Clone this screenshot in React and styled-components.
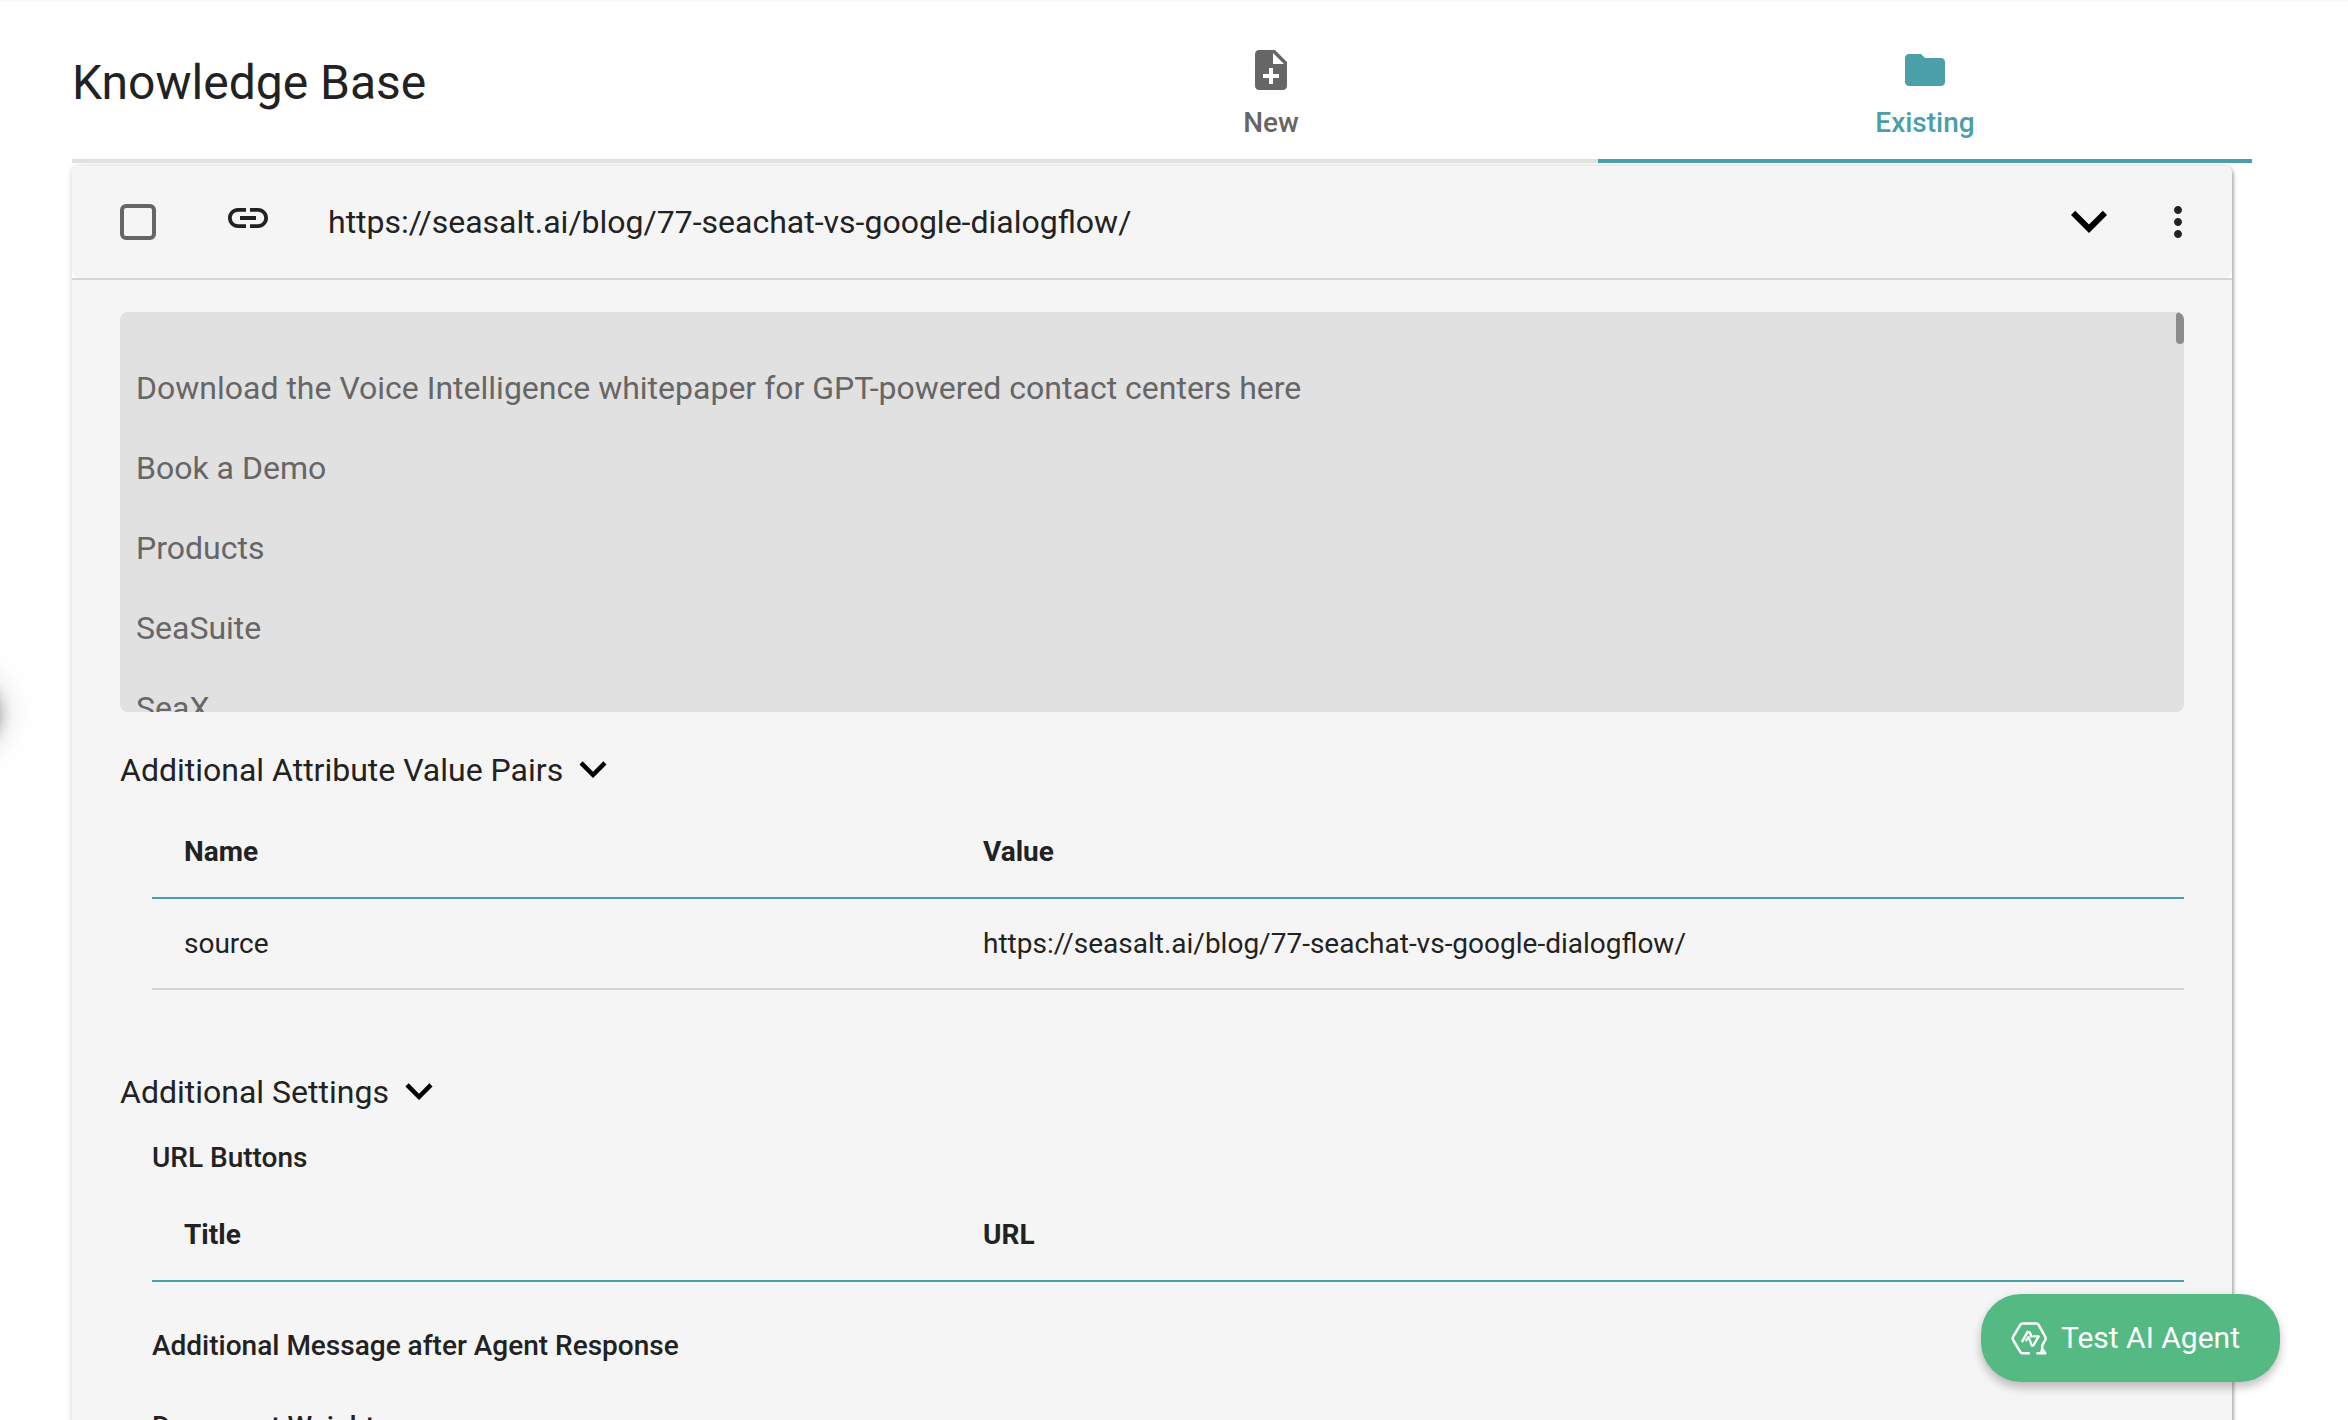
import React from "react";
import styled, { createGlobalStyle } from "styled-components";
import { MdNoteAdd, MdFolder, MdLink, MdMoreVert } from "react-icons/md";

const Global = createGlobalStyle`
  * { box-sizing: border-box; }
  html, body { margin: 0; height: 1420px; overflow: hidden; background: #fff; }
  body { font-family: Roboto, "Liberation Sans", sans-serif; color: #222; }
  svg { display: block; flex: none; }
`;

const Page = styled.main`
  position: relative;
  width: 2348px;
  height: 1420px;
  overflow: hidden;
  padding: 0 96px 0 72px;
  box-shadow: inset 0 2px 2px -1px rgba(0, 0, 0, 0.05);
`;

const Header = styled.header`
  display: flex;
  height: 163px;
`;

const Title = styled.h1`
  flex: 1;
  margin: 0;
  padding-top: 55px;
  border-bottom: 4px solid #e0e0e0;
  font-size: 48px;
  font-weight: 400;
  line-height: 56px;
`;

const Tab = styled.div`
  display: flex;
  flex-direction: column;
  align-items: center;
  width: 654px;
  padding-top: 46px;
  gap: 13px;
  border-bottom: 4px solid ${(p) => (p.$active ? "#4a9fa8" : "#e0e0e0")};
  color: ${(p) => (p.$active ? "#4a9fa8" : "#666")};
  font-size: 28px;
  font-weight: 500;
  line-height: 32px;
`;

const Card = styled.section`
  width: 2160px;
  height: 1300px;
  margin-top: 3px;
  border-radius: 8px;
  background: linear-gradient(#fff 0 112px, #f5f5f5 112px);
  box-shadow: 2px 2px 3px rgba(0, 0, 0, 0.22), 0 0 6px rgba(0, 0, 0, 0.18);
`;

const CardHeader = styled.div`
  display: flex;
  align-items: center;
  height: 112px;
  padding: 0 30px 0 48px;
  border-radius: 8px;
  background: #f5f5f5;
`;

const Checkbox = styled.span`
  flex: none;
  width: 36px;
  height: 36px;
  border: 4px solid #666;
  border-radius: 6px;
`;

const LinkIcon = styled.span`
  margin: -8px 56px 0 68px;
`;

const Url = styled.span`
  flex: 1;
  font-size: 32px;
  line-height: 40px;
`;

const HeaderActions = styled.div`
  display: flex;
  align-items: center;
  gap: 29px;
`;

const CardBody = styled.div`
  border-top: 2px solid #d5d5d5;
  padding: 32px 48px 0;
`;

const TextArea = styled.div`
  position: relative;
  height: 400px;
  padding: 56px 16px 0;
  overflow: hidden;
  border-radius: 8px;
  background: #e1e1e1;
  color: #666;
  font-size: 32px;
  line-height: 40px;
`;

const Paragraph = styled.p`
  margin: 0 0 40px;
`;

const ScrollThumb = styled.div`
  position: absolute;
  top: 0;
  right: 0;
  width: 8px;
  height: 32px;
  border-radius: 4px;
  background: #8c8c8c;
`;

const SectionTitle = styled.h2`
  display: flex;
  align-items: center;
  gap: 3px;
  height: 54px;
  margin: ${(p) => p.$top}px 0 0;
  font-size: 32px;
  font-weight: 400;
  line-height: 40px;
`;

const Settings = styled.div`
  padding-left: 32px;
`;

const Label = styled.h3`
  margin: ${(p) => p.$top}px 0 0;
  font-size: 28px;
  font-weight: 500;
  line-height: 36px;
`;

const Table = styled.div`
  margin-top: ${(p) => p.$top}px;
`;

const Row = styled.div`
  display: grid;
  grid-template-columns: 799px 1fr;
  align-items: center;
  height: ${(p) => (p.$head ? 92 : 91)}px;
  border-bottom: 2px solid ${(p) => (p.$head ? "#4a9fa8" : "#d5d5d5")};
  font-size: 28px;
  font-weight: ${(p) => (p.$head ? 700 : 400)};
  line-height: 36px;
`;

const Cell = styled.div`
  padding: 0 32px;
`;

const AgentButton = styled.button`
  position: absolute;
  left: 1981px;
  top: 1294px;
  display: flex;
  align-items: center;
  gap: 14px;
  width: 299px;
  height: 88px;
  padding: 0 0 0 30px;
  border: 0;
  border-radius: 40px;
  background: #55b983;
  box-shadow: 0 6px 10px rgba(0, 0, 0, 0.2), 0 2px 12px rgba(0, 0, 0, 0.06);
  color: #fff;
  font: 400 30px/36px Roboto, "Liberation Sans", sans-serif;
  white-space: nowrap;
`;

const DrawerHandle = styled.div`
  position: absolute;
  left: -72px;
  top: 674px;
  width: 72px;
  height: 72px;
  border-radius: 50%;
  box-shadow: 0 4px 14px rgba(0, 0, 0, 0.3), 0 2px 36px rgba(0, 0, 0, 0.22);
`;

const ChevronSvg = styled.svg`
  margin-top: -2px;
`;

const Chevron = ({ size }) => (
  <ChevronSvg width={size} height={size} viewBox="0 0 24 24" fill="#000">
    <path d="M7.41 8.58 12 13.17l4.59-4.59L18 10l-6 6-6-6z" />
  </ChevronSvg>
);

const AgentIcon = () => (
  <svg width="36" height="36" viewBox="0 0 36 36" fill="none" stroke="#fff" strokeWidth="2.5" strokeLinejoin="round">
    <path d="M18.8 33.2H11.6Q10 33.2 9.2 31.9L2.2 20Q1.2 18.3 2.2 16.6L9.2 4.800Q10 3.500 11.600 3.500H25.200Q26.800 3.500 27.600 4.800L34.200 16.600Q35.100 18.300 34.200 20L31.200 25.600V28.600L34.300 33.200H25.300" />
    <path d="M30.5 28.5L29.5 33H34L31.5 29Z" fill="#fff" strokeWidth="1" />
    <path d="M11.3 21.300L16.500 11.800L18.600 12.400L20.600 16.500" strokeWidth="2.400" strokeLinecap="round" />
    <path d="M15.300 20.300L17.600 16.800L20.800 25.600H22.200L27.800 16.400H22.800" strokeWidth="2.200" strokeLinecap="round" />
  </svg>
);

const paragraphs = [
  "Download the Voice Intelligence whitepaper for GPT-powered contact centers here",
  "Book a Demo",
  "Products",
  "SeaSuite",
  "SeaX",
];

export default function App() {
  return (
    <Page>
      <Global />
      <Header>
        <Title>Knowledge Base</Title>
        <Tab><MdNoteAdd size={48} />New</Tab>
        <Tab $active><MdFolder size={48} />Existing</Tab>
      </Header>
      <Card>
        <CardHeader>
          <Checkbox />
          <LinkIcon><MdLink size={48} /></LinkIcon>
          <Url>https://seasalt.ai/blog/77-seachat-vs-google-dialogflow/</Url>
          <HeaderActions>
            <Chevron size={72} />
            <MdMoreVert size={48} />
          </HeaderActions>
        </CardHeader>
        <CardBody>
          <TextArea>
            {paragraphs.map((t) => <Paragraph key={t}>{t}</Paragraph>)}
            <ScrollThumb />
          </TextArea>
          <SectionTitle $top={31}>Additional Attribute Value Pairs<Chevron size={54} /></SectionTitle>
          <Settings>
            <Table $top={10}>
              <Row $head><Cell>Name</Cell><Cell>Value</Cell></Row>
              <Row><Cell>source</Cell><Cell>https://seasalt.ai/blog/77-seachat-vs-google-dialogflow/</Cell></Row>
            </Table>
          </Settings>
          <SectionTitle $top={75}>Additional Settings<Chevron size={54} /></SectionTitle>
          <Settings>
            <Label $top={21}>URL Buttons</Label>
            <Table $top={14}>
              <Row $head><Cell>Title</Cell><Cell>URL</Cell></Row>
            </Table>
            <Label $top={46}>Additional Message after Agent Response</Label>
            <Label $top={45}>Document Weight</Label>
          </Settings>
        </CardBody>
      </Card>
      <DrawerHandle />
      <AgentButton><AgentIcon />Test AI Agent</AgentButton>
    </Page>
  );
}
